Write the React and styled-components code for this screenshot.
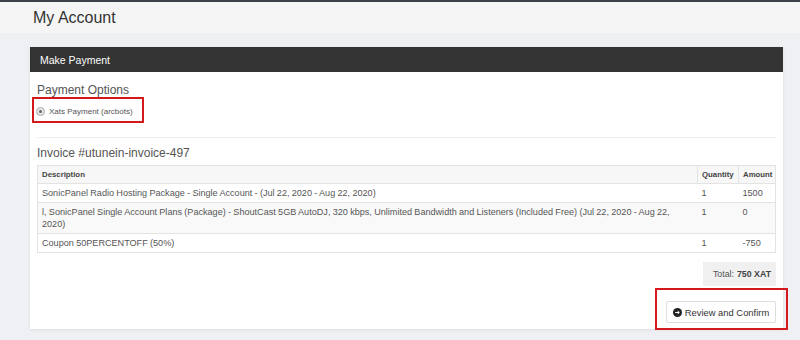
import React from 'react'
import styled, { createGlobalStyle } from 'styled-components'

const Global = createGlobalStyle`
  html, body {
    margin: 0;
    padding: 0;
    background: #eff0f4;
    font-family: "Liberation Sans", Arial, sans-serif;
    color: #555;
  }
`

const TopLine = styled.div`
  height: 2px;
  background: #3d4248;
`

const PageHeader = styled.div`
  height: 31px;
  background: #f5f5f5;
  padding-left: 33px;
  display: flex;
  align-items: center;
  font-size: 16px;
  color: #333;
`

const Main = styled.div`
  padding: 14px 17px 11px 30px;
`

const Panel = styled.div`
  background: #fff;
  box-shadow: 0 1px 3px rgba(0, 0, 0, 0.08);
`

const PanelHeading = styled.div`
  height: 25px;
  background: #333;
  color: #fff;
  font-size: 10.5px;
  display: flex;
  align-items: center;
  padding-left: 10px;
`

const PanelBody = styled.div`
  padding: 11px 7px 0 7px;
  height: 246px;
`

const SectionTitle = styled.div`
  font-size: 12px;
  color: #555;
  line-height: 14px;
`

const Highlight = styled.div`
  display: inline-flex;
  align-items: center;
  border: 2px solid #d3191c;
  margin-left: -5px;
  margin-top: ${p => p.$top || 0}px;
  padding: ${p => p.$pad};
  box-sizing: border-box;
`

const RadioRow = styled.label`
  display: flex;
  align-items: center;
  gap: 4px;
  font-size: 8px;
  color: #555;
  margin-top: 2px;
`

const RadioDot = styled.span`
  width: 7px;
  height: 7px;
  border-radius: 50%;
  border: 1px solid #aaa;
  background: #e6e6e6;
  display: flex;
  align-items: center;
  justify-content: center;
  &::after {
    content: '';
    width: 3px;
    height: 3px;
    border-radius: 50%;
    background: #666;
  }
`

const Divider = styled.hr`
  border: 0;
  border-top: 1px solid #eee;
  margin: 14px 0 8px 0;
`

const InvoiceTitle = styled.div`
  font-size: 12px;
  color: #555;
  line-height: 14px;
  margin-bottom: 5px;
`

const Table = styled.table`
  width: 100%;
  table-layout: fixed;
  border-collapse: collapse;
  font-size: 9.1px;
  color: #555;
  border: 1px solid #e3e3e3;
`

const Th = styled.th`
  text-align: left;
  font-weight: bold;
  font-size: 7.8px;
  color: #444;
  background: #f7f7f7;
  padding: 0 4px;
  height: 17px;
  border: 1px solid #e3e3e3;
`

const Td = styled.td`
  padding: 3px ${p => (p.$first ? 12 : 3)}px 3px 4px;
  vertical-align: top;
  line-height: 12px;
  border-top: 1px solid #e3e3e3;
  border-left: ${p => (p.$first ? '1px solid #e3e3e3' : 'none')};
  word-spacing: -0.25px;
`

const Tr = styled.tr`
  background: ${p => (p.$striped ? '#f9f9f9' : '#fff')};
`

const TotalRow = styled.div`
  display: flex;
  justify-content: flex-end;
  margin-top: 9px;
`

const TotalBox = styled.div`
  width: 73px;
  height: 24px;
  background: #f0f0f0;
  display: flex;
  align-items: center;
  justify-content: flex-end;
  padding-right: 5px;
  box-sizing: border-box;
  font-size: 8.8px;
  color: #555;
  b {
    color: #444;
    margin-left: 3px;
  }
`

const ActionRow = styled.div`
  display: flex;
  justify-content: flex-end;
  margin-right: -12px;
`

const Button = styled.button`
  width: 110px;
  height: 22px;
  background: #fff;
  border: 1px solid #ddd;
  border-radius: 2px;
  display: flex;
  align-items: center;
  justify-content: center;
  gap: 3px;
  font-family: "Liberation Sans", Arial, sans-serif;
  font-size: 9.4px;
  color: #333;
  padding: 0;
`

const ArrowIcon = () => (
  <svg width="9" height="9" viewBox="0 0 16 16">
    <circle cx="8" cy="8" r="8" fill="#222" />
    <path d="M4 7h4.5V4.5L12 8l-3.5 3.5V9H4z" fill="#fff" />
  </svg>
)

const rows = [
  {
    desc: 'SonicPanel Radio Hosting Package - Single Account - (Jul 22, 2020 - Aug 22, 2020)',
    qty: '1',
    amt: '1500',
  },
  {
    desc: 'l, SonicPanel Single Account Plans (Package) - ShoutCast 5GB AutoDJ, 320 kbps, Unlimited Bandwidth and Listeners (Included Free) (Jul 22, 2020 - Aug 22, 2020)',
    qty: '1',
    amt: '0',
  },
  { desc: 'Coupon 50PERCENTOFF (50%)', qty: '1', amt: '-750' },
]

export default function App() {
  return (
    <>
      <Global />
      <TopLine />
      <PageHeader>My Account</PageHeader>
      <Main>
        <Panel>
          <PanelHeading>Make Payment</PanelHeading>
          <PanelBody>
            <SectionTitle>Payment Options</SectionTitle>
            <Highlight $top={0} $pad="0 9px 0 2px" style={{ width: 112, height: 26 }}>
              <RadioRow>
                <RadioDot />
                Xats Payment (arcbots)
              </RadioRow>
            </Highlight>
            <Divider />
            <InvoiceTitle>Invoice #utunein-invoice-497</InvoiceTitle>
            <Table>
              <colgroup>
                <col />
                <col width="41" />
                <col width="37" />
              </colgroup>
              <thead>
                <tr>
                  <Th>Description</Th>
                  <Th>Quantity</Th>
                  <Th>Amount</Th>
                </tr>
              </thead>
              <tbody>
                {rows.map((r, i) => (
                  <Tr key={i} $striped={i === 1}>
                    <Td $first>{r.desc}</Td>
                    <Td>{r.qty}</Td>
                    <Td>{r.amt}</Td>
                  </Tr>
                ))}
              </tbody>
            </Table>
            <TotalRow>
              <TotalBox>
                Total:<b>750 XAT</b>
              </TotalBox>
            </TotalRow>
            <ActionRow>
              <Highlight $top={2} $pad="11px 10px 5px 9px">
                <Button>
                  <ArrowIcon />
                  Review and Confirm
                </Button>
              </Highlight>
            </ActionRow>
          </PanelBody>
        </Panel>
      </Main>
    </>
  )
}
